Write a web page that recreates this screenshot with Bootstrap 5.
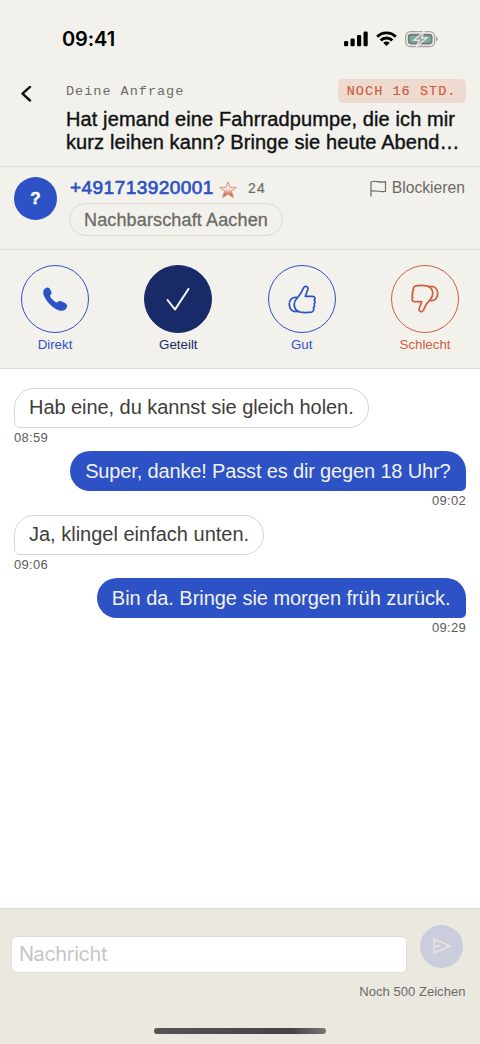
<!DOCTYPE html>
<html lang="de">
<head>
<meta charset="utf-8">
<meta name="viewport" content="width=device-width, initial-scale=1">
<title>Deine Anfrage</title>
<link rel="stylesheet" href="https://cdn.jsdelivr.net/npm/bootstrap@5.3.0/dist/css/bootstrap.min.css">
<style>
  body { font-family: "Liberation Sans", Arial, sans-serif; color: #101214; background: #fff; height: 1044px; overflow: hidden; }
  .paper { background: #f3f1ec; }
  .rule { border-bottom: 1px solid #dddcd7; }
  .mono { font-family: "Liberation Mono", monospace; font-size: 13.5px; letter-spacing: 1px; line-height: 16px; white-space: nowrap; -webkit-text-stroke: .2px; }
  .ink-blue { color: #2c52c6; }
  .ink-navy { color: #182a68; }
  .ink-rust { color: #cc5f3d; }
  .ink-grey { color: #6c6b67; }
  .statusbar { height: 78px; padding: 0 41px 0 62px; }
  .clock { font: 600 20px/24px Inter, sans-serif; color: #000; letter-spacing: -.1px; }
  .request { height: 89px; padding: 0 14.5px 0 20px; }
  .kicker { height: 27px; padding-top: 1px; }
  .kicker-label { padding-top: 5px; -webkit-text-stroke: 0; }
  .deadline { background: #efdad0; border-radius: 5px; height: 24px; padding: 5px 9px 0 8.5px; letter-spacing: 1.05px; }
  .request h1 { font-size: 20px; line-height: 22.5px; letter-spacing: .11px; font-weight: 400; -webkit-text-stroke: .4px; white-space: nowrap; margin: 3px 0 0; }
  .person { height: 83px; padding: 10px 15px 0 14px; }
  .avatar { width: 43px; height: 43px; background: #2c52c6; font-size: 17px; -webkit-text-stroke: .5px; }
  .phone { font-size: 19px; line-height: 22px; letter-spacing: .46px; -webkit-text-stroke: .7px; margin-left: 1px; }
  .rating { font-size: 14px; letter-spacing: 1.2px; -webkit-text-stroke: .2px; margin-left: 11px; }
  .block-link { font-size: 15.7px; line-height: 22px; }
  .group-chip { border: 1.3px solid #d9d8d2; border-radius: 17px; height: 33px; width: 214px; font-size: 18px; line-height: 32px; letter-spacing: .14px; -webkit-text-stroke: .3px; margin-top: 4px; }
  .actions { height: 119px; padding: 15px 20px 0; }
  .action { width: 70px; font-size: 13.3px; line-height: 18px; }
  .ring { width: 68px; height: 68px; border: 1.3px solid currentColor; margin: 0 auto 3px; }
  .filled { background: #182a68; }
  .chat { height: 539px; padding: 19px 14px 0; }
  .bubble { font-size: 20px; line-height: 24px; padding: 7px 14px; height: 40px; white-space: nowrap; }
  .theirs { border: 1px solid #d6d5cd; border-radius: 20px 20px 20px 6px; color: #3e3e3b; line-height: 23px; }
  .mine { background: #2c52c6; border-radius: 20px 20px 5px 20px; color: #f3f1ec; padding: 8px 15px; margin-right: .5px; }
  .snug { letter-spacing: -.04px; }
  .tight { letter-spacing: -.06px; }
  .tighter { letter-spacing: -.15px; }
  .stamp { font-size: 13px; line-height: 19px; letter-spacing: .3px; margin-bottom: 4.4px; color: #5c5b58; }
  .composer { background: #ebe8e0; border-top: 1px solid #dad8d2; height: 136px; padding: 15.500px 14.500px 0 11px; }
  .field { width: 396px; height: 37px; margin-top: 11.500px; padding: 0 7px; background: #fff; border: 1px solid #dedcd6; border-radius: 6px; font-size: 20px; line-height: 35px; letter-spacing: -.45px; font-family: Inter, sans-serif; color: #c5c5c5; }
  .send { width: 43px; height: 43px; background: #cbcddc; margin-right: 2.500px; }
  .counter { font-size: 13px; line-height: 17px; letter-spacing: .05px; margin-top: 10px; }
  .home-indicator { width: 172px; height: 6px; border-radius: 3px; background: linear-gradient(90deg, #555, #444 80%, #777); margin: 28px 0 0 143px; }
</style>
</head>
<body>
<div class="paper">
  <div class="statusbar d-flex align-items-center justify-content-between">
    <span class="clock">09:41</span>
    <div class="d-flex align-items-center">
      <svg width="24" height="16" viewBox="0 0 24 16" fill="#000"><rect x="0" y="10" width="4.200" height="5.200" rx="1.200"/><rect x="6.500" y="7.500" width="4.200" height="7.700" rx="1.200"/><rect x="13" y="4" width="4.200" height="11.200" rx="1.200"/><rect x="19.500" y=".5" width="4.200" height="14.700" rx="1.200"/></svg>
      <svg class="ms-2" width="21" height="16" viewBox="0 0 21 16" fill="none" stroke="#000" stroke-width="2.900"><path d="M1.200 5.700a13.200 13.200 0 0 1 18.600 0M4.700 9.400a8.300 8.300 0 0 1 11.600 0"/><path d="M10.500 15 7.300 11.800a4.600 4.600 0 0 1 6.400 0z" fill="#000" stroke="none"/></svg>
      <svg class="ms-2" width="34" height="18" viewBox="0 0 34 18"><rect x=".7" y="1.700" width="29" height="14.800" rx="4.800" fill="none" stroke="#a6a5a1" stroke-width="1.300"/><rect x="3.600" y="4.600" width="23.200" height="9" rx="2.500" fill="#78aaa1" stroke="#777" stroke-width="1.600"/><path d="M31 6.500v5c2.400-1 2.400-4 0-5z" fill="#a6a5a1"/><path d="M19.500 .8 8.800 10.200h5.400L11.200 17.200 22 7.900h-5.400z" fill="#a9a8a4" stroke="#f3f1ec" stroke-width="1.100"/></svg>
    </div>
  </div>
  <header class="request rule d-flex">
    <svg class="flex-shrink-0 mt-2" width="14" height="17" viewBox="0 0 14 17" fill="none" stroke="#101214" stroke-width="2.400" stroke-linecap="round" stroke-linejoin="round"><path d="M10 .9 2.500 7.700l7.500 6.800"/></svg>
    <div class="flex-grow-1 ms-4 ps-2">
      <div class="kicker d-flex justify-content-between align-items-start">
        <span class="mono kicker-label ink-grey">Deine Anfrage</span>
        <span class="mono deadline ink-rust">NOCH 16 STD.</span>
      </div>
      <h1>Hat jemand eine Fahrradpumpe, die ich mir<br>kurz leihen kann? Bringe sie heute Abend…</h1>
    </div>
  </header>
  <section class="person rule d-flex">
    <div class="avatar rounded-circle d-flex align-items-center justify-content-center text-white fw-bold">?</div>
    <div class="flex-grow-1 ms-2 ps-1">
      <div class="d-flex align-items-center">
        <span class="phone ink-blue">+491713920001</span>
        <svg class="ms-1 mt-1" width="19" height="18" viewBox="-1 0 18 17"><defs><linearGradient id="starfill" x2="0" y2="1"><stop offset=".45" stop-color="#f7e9e0"/><stop offset=".85" stop-color="#cc5f3d"/></linearGradient></defs><path d="m8.500 .8 2 5.200h5.900l-4.600 3.500 1.700 6.100-5-3.400-5 3.400 1.700-6.100L.6 6h5.900z" fill="url(#starfill)" stroke="#d38467" stroke-width=".8"/></svg>
        <span class="rating ink-grey">24</span>
        <span class="block-link ms-auto ink-grey d-flex align-items-center"><svg class="me-1" width="18" height="17" viewBox="0 0 18 17" fill="none" stroke="#6c6b67" stroke-width="1.200" stroke-linejoin="round"><path d="M1 16.500V2C5.500-.5 9 3.500 15.500 1.700v9.600c-6 1.600-9-1.800-14.500 0"/></svg>Blockieren</span>
      </div>
      <div class="group-chip text-center ink-grey">Nachbarschaft Aachen</div>
    </div>
  </section>
  <nav class="actions rule d-flex justify-content-between text-center">
    <div class="action ink-blue"><div class="ring rounded-circle d-flex align-items-center justify-content-center"><svg width="26" height="26" viewBox="0 0 26 26" fill="currentColor"><path d="M4.500 1.800c1.700-.7 2.700-.1 4 2.200 1.300 2.200 1.500 3.400.1 4.700-1 1-.6 2.200 1.900 4.900 2.600 2.700 4.100 3.400 5.200 2.300 1.300-1.300 2.800-1.100 5.300.1 3 1.400 4.300 2.600 4.100 4.300-.4 3.500-3.700 5.200-7.800 4.100C10.800 22.600 2.500 13.900 1.300 7.500c-.5-2.800 1-4.900 3.200-5.700z"/></svg></div>Direkt</div>
    <div class="action ink-navy"><div class="ring filled rounded-circle d-flex align-items-center justify-content-center"><svg width="24" height="24" viewBox="0 0 24 24" fill="none" stroke="#fff" stroke-width="2" stroke-linecap="round" stroke-linejoin="round"><path d="m1.500 13 7.500 9.500L22.500 2"/></svg></div>Geteilt</div>
    <div class="action ink-blue"><div class="ring rounded-circle d-flex align-items-center justify-content-center"><svg width="28" height="30" viewBox="0 0 28 30" fill="none" stroke="currentColor" stroke-width="1.700" stroke-linejoin="round"><path id="thumb" d="M8.500 14.800c2.800-2.800 5.600-7.200 7.200-11.200 1.300-2.400 4.800-1.100 4.200 1.600l-2.600 7.100h7.200c2.500 0 3 2.700 1.700 4 1.100 1.100 1 2.700-.1 3.600.9 1.200.6 2.900-.6 3.600.6 2-.2 4.400-2.200 4.700-4 .5-8.200.5-11 0-6.800-1.600-7.500-9.200-3.800-13.400z"/><path id="cuff" d="M9 13.500C4.300 12.600 1.300 15.800 1.300 20.500c0 4.900 3.200 7.700 8.200 7"/></svg></div>Gut</div>
    <div class="action ink-rust"><div class="ring rounded-circle d-flex align-items-center justify-content-center"><svg width="28" height="30" viewBox="0 0 28 30" fill="none" stroke="currentColor" stroke-width="1.700" stroke-linejoin="round"><g transform="rotate(180 14 15)"><use href="#thumb"/><use href="#cuff"/></g></svg></div>Schlecht</div>
  </nav>
</div>
<main class="chat d-flex flex-column">
  <div class="bubble theirs tight align-self-start">Hab eine, du kannst sie gleich holen.</div>
  <div class="stamp">08:59</div>
  <div class="bubble mine tighter align-self-end">Super, danke! Passt es dir gegen 18 Uhr?</div>
  <div class="stamp text-end">09:02</div>
  <div class="bubble theirs align-self-start">Ja, klingel einfach unten.</div>
  <div class="stamp">09:06</div>
  <div class="bubble mine snug align-self-end">Bin da. Bringe sie morgen früh zurück.</div>
  <div class="stamp text-end">09:29</div>
</main>
<footer class="composer">
  <div class="d-flex justify-content-between align-items-start">
    <div class="field">Nachricht</div>
    <div class="send rounded-circle d-flex align-items-center justify-content-center"><svg width="20" height="18" viewBox="0 0 20 18" fill="none" stroke="#e4e2df" stroke-width="1.800"><path d="M2 2.200v13.600L18 9zM2 9h6.500"/></svg></div>
  </div>
  <div class="counter text-end ink-grey">Noch 500 Zeichen</div>
  <div class="home-indicator"></div>
</footer>
<script src="https://cdn.jsdelivr.net/npm/bootstrap@5.3.0/dist/js/bootstrap.bundle.min.js"></script>
</body>
</html>
